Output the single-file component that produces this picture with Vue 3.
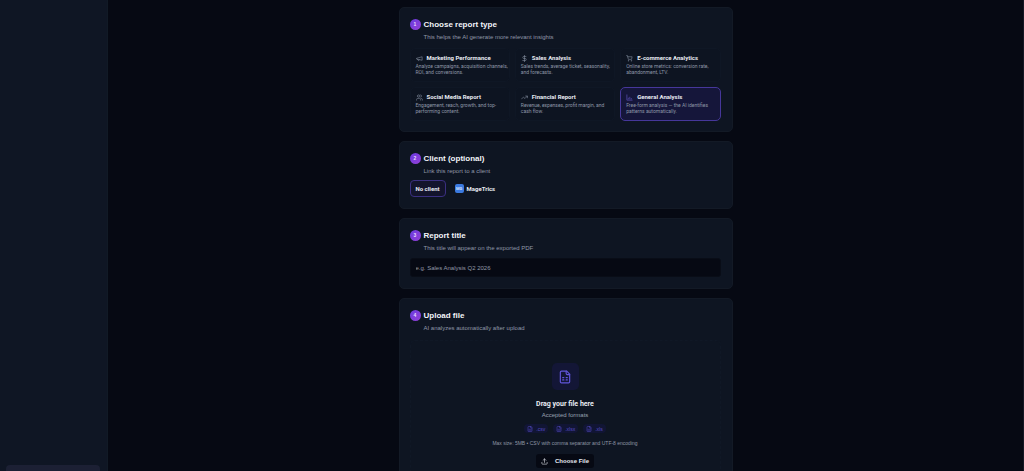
<script setup>
import { ref } from 'vue'

const selectedType = ref('general')
const title = ref('')

const reportTypes = [
  {
    id: 'marketing',
    name: 'Marketing Performance',
    text: 'Analyze campaigns, acquisition channels, ROI, and conversions.',
    paths: ['M3 11l18-5v12L3 14z', 'M11.6 16.8a3 3 0 1 1-5.8-1.6'],
  },
  {
    id: 'sales',
    name: 'Sales Analysis',
    text: 'Sales trends, average ticket, seasonality, and forecasts.',
    paths: ['M12 1v22', 'M17 5H9.5a3.5 3.5 0 0 0 0 7h5a3.5 3.5 0 0 1 0 7H6'],
  },
  {
    id: 'ecommerce',
    name: 'E-commerce Analytics',
    text: 'Online store metrics: conversion rate, abandonment, LTV.',
    paths: [
      'M2 2h3l3 13h11l2-9H6',
      'M8 20a1 1 0 1 0 2 0a1 1 0 1 0-2 0',
      'M18 20a1 1 0 1 0 2 0a1 1 0 1 0-2 0',
    ],
  },
  {
    id: 'social',
    name: 'Social Media Report',
    text: 'Engagement, reach, growth, and top-performing content.',
    paths: [
      'M16 21v-2a4 4 0 0 0-4-4H6a4 4 0 0 0-4 4v2',
      'M5 7a4 4 0 1 0 8 0a4 4 0 1 0-8 0',
      'M22 21v-2a4 4 0 0 0-3-3.9',
      'M16 3.1a4 4 0 0 1 0 7.8',
    ],
  },
  {
    id: 'financial',
    name: 'Financial Report',
    text: 'Revenue, expenses, profit margin, and cash flow.',
    paths: ['M22 7l-8.5 8.5-5-5L2 17', 'M16 7h6v6'],
  },
  {
    id: 'general',
    name: 'General Analysis',
    text: 'Free-form analysis — the AI identifies patterns automatically.',
    paths: ['M3 3v18h18', 'M8 17v-3', 'M13 17v-6', 'M18 17v-2'],
  },
]

const formats = ['.csv', '.xlsx', '.xls']

const sheetPaths = [
  'M15 2H6a2 2 0 0 0-2 2v16a2 2 0 0 0 2 2h12a2 2 0 0 0 2-2V7z',
  'M14 2v4a2 2 0 0 0 2 2h4',
  'M8 13h2',
  'M14 13h2',
  'M8 17h2',
  'M14 17h2',
]
</script>

<template>
  <div class="shell">
    <aside class="sidebar">
      <div class="sidebar-card"></div>
    </aside>

    <main class="main">
      <div class="column">
        <section class="card types-card">
          <header class="head">
            <span class="step">1</span>
            <h2>Choose report type</h2>
          </header>
          <p class="sub">This helps the AI generate more relevant insights</p>
          <div class="types">
            <button
              v-for="type in reportTypes"
              :key="type.id"
              type="button"
              class="type"
              :class="{ selected: selectedType === type.id }"
              @click="selectedType = type.id"
            >
              <span class="type-head">
                <svg class="icon" viewBox="0 0 24 24" aria-hidden="true">
                  <path v-for="d in type.paths" :key="d" :d="d" />
                </svg>
                <span class="type-name">{{ type.name }}</span>
              </span>
              <span class="type-text">{{ type.text }}</span>
            </button>
          </div>
        </section>

        <section class="card">
          <header class="head">
            <span class="step">2</span>
            <h2>Client (optional)</h2>
          </header>
          <p class="sub">Link this report to a client</p>
          <div class="clients">
            <button type="button" class="client selected">No client</button>
            <button type="button" class="client">
              <span class="avatar">MG</span>
              MageTrics
            </button>
          </div>
        </section>

        <section class="card">
          <header class="head">
            <span class="step">3</span>
            <h2><label for="report-title">Report title</label></h2>
          </header>
          <p class="sub">This title will appear on the exported PDF</p>
          <input
            id="report-title"
            v-model="title"
            class="field"
            type="text"
            placeholder="e.g. Sales Analysis Q2 2026"
          />
        </section>

        <section class="card">
          <header class="head">
            <span class="step">4</span>
            <h2>Upload file</h2>
          </header>
          <p class="sub">AI analyzes automatically after upload</p>
          <div class="drop">
            <span class="drop-icon">
              <svg viewBox="0 0 24 24" aria-hidden="true">
                <path v-for="d in sheetPaths" :key="d" :d="d" />
              </svg>
            </span>
            <p class="drop-title">Drag your file here</p>
            <p class="drop-sub">Accepted formats</p>
            <div class="formats">
              <span v-for="format in formats" :key="format" class="format">
                <svg viewBox="0 0 24 24" aria-hidden="true">
                  <path v-for="d in sheetPaths" :key="d" :d="d" />
                </svg>
                {{ format }}
              </span>
            </div>
            <p class="hint">Max size: 5MB • CSV with comma separator and UTF-8 encoding</p>
            <button type="button" class="choose">
              <svg viewBox="0 0 24 24" aria-hidden="true">
                <path d="M21 15v4a2 2 0 0 1-2 2H5a2 2 0 0 1-2-2v-4" />
                <path d="M17 8l-5-5-5 5" />
                <path d="M12 3v12" />
              </svg>
              Choose File
            </button>
          </div>
        </section>
      </div>
    </main>
  </div>
</template>

<style>
body {
  margin: 0;
  background: #060913;
}
</style>

<style scoped>
.shell {
  display: flex;
  height: 100vh;
  overflow: hidden;
  background: #060913;
  color: #e8ebf2;
  font-family: "Liberation Sans", Arial, sans-serif;
}

.shell *,
.shell {
  box-sizing: border-box;
}

button,
input {
  font-family: inherit;
  margin: 0;
}

svg {
  fill: none;
  stroke: currentColor;
  stroke-width: 2;
  stroke-linecap: round;
  stroke-linejoin: round;
  flex: none;
}

.sidebar {
  flex: 0 0 108px;
  display: flex;
  flex-direction: column;
  justify-content: flex-end;
  padding: 0 7px 0 6px;
  background: #0f1624;
  border-right: 1px solid #111a26;
}

.sidebar-card {
  height: 6px;
  border-radius: 4px 4px 0 0;
  background: #1c2034;
}

.main {
  flex: 1;
  overflow-y: auto;
  scrollbar-width: none;
  border-right: 1px solid #141824;
}

.column {
  display: flex;
  flex-direction: column;
  gap: 9px;
  width: 100%;
  max-width: 334px;
  margin: 0 auto;
  padding: 7px 0;
}

.card {
  padding: 11px 11px 11px 10px;
  background: #0e1522;
  border: 1px solid #131a26;
  border-radius: 5px;
}

.types-card {
  padding-bottom: 10px;
}

.head {
  display: flex;
  align-items: center;
  gap: 3px;
}

.step {
  display: grid;
  place-items: center;
  width: 11px;
  height: 11px;
  border-radius: 50%;
  background: linear-gradient(135deg, #6a3be0, #9440d6);
  color: #e6d9fb;
  font-size: 5px;
  font-weight: 700;
  line-height: 11px;
}

h2 {
  margin: 0;
  font-size: 8px;
  line-height: 11px;
  font-weight: 700;
  color: #f2f4f9;
}

p {
  margin: 0;
}

.sub {
  margin: 3px 0 0 14px;
  font-size: 6px;
  line-height: 8px;
  color: #9098a8;
}

.types {
  display: grid;
  grid-template-columns: repeat(3, minmax(0, 1fr));
  gap: 5px;
  margin-top: 7px;
}

.type {
  display: flex;
  flex-direction: column;
  gap: 1px;
  height: 34px;
  padding: 5px 0 5px 5px;
  border: 1px solid #0f1725;
  border-radius: 5px;
  background: #0d1421;
  text-align: left;
  color: inherit;
}

.type.selected {
  background: #15163a;
  border-color: #46379a;
}

.type-head {
  display: flex;
  align-items: center;
  gap: 4px;
}

.icon {
  width: 7px;
  height: 7px;
  color: #8790a2;
}

.selected .icon {
  color: #6a5bd0;
}

.type-name {
  font-family: Roboto, "Liberation Sans", sans-serif;
  font-size: 6px;
  line-height: 8px;
  font-weight: 700;
  white-space: nowrap;
}

.type-text {
  font-family: Roboto, "Liberation Sans", sans-serif;
  font-size: 5px;
  line-height: 6px;
  color: #8d96a7;
}

.clients {
  display: flex;
  gap: 3px;
  margin-top: 5px;
}

.client {
  display: flex;
  align-items: center;
  gap: 3px;
  height: 17px;
  padding: 0 5px;
  border: 1px solid transparent;
  border-radius: 4px;
  background: transparent;
  color: #e8ebf2;
  font-family: Roboto, "Liberation Sans", sans-serif;
  font-size: 6px;
  font-weight: 700;
}

.client.selected {
  background: #13142c;
  border-color: #3b3081;
}

.avatar {
  display: grid;
  place-items: center;
  width: 9px;
  height: 9px;
  border-radius: 2px;
  background: #3b7ae0;
  color: #d5e4fc;
  font-size: 4px;
}

.field {
  display: block;
  width: 100%;
  height: 19px;
  margin-top: 6px;
  padding: 0 5px;
  border: 1px solid #090d17;
  border-radius: 3px;
  background: #060913;
  color: #e8ebf2;
  font-size: 6px;
}

.field::placeholder {
  color: #9299a8;
  opacity: 1;
}

.drop {
  display: flex;
  flex-direction: column;
  align-items: center;
  margin-top: 8px;
  padding: 22px 10px;
  border: 1px dashed #101826;
  border-radius: 5px;
}

.drop-icon {
  display: grid;
  place-items: center;
  width: 27px;
  height: 27px;
  border-radius: 5px;
  background: #131636;
  color: #6156dc;
}

.drop-icon svg {
  width: 14px;
  height: 14px;
}

.drop-title {
  margin-top: 9px;
  font-family: Roboto, "Liberation Sans", sans-serif;
  font-size: 7px;
  line-height: 10px;
  font-weight: 700;
}

.drop-sub {
  margin-top: 2px;
  font-size: 6px;
  line-height: 8px;
  color: #9aa2b1;
}

.formats {
  display: flex;
  gap: 5px;
  margin-top: 5px;
}

.format {
  display: flex;
  align-items: center;
  gap: 3px;
  height: 9px;
  padding: 0 3px;
  border-radius: 4px;
  background: #111534;
  color: #574dc6;
  font-size: 5px;
}

.format svg {
  width: 6px;
  height: 6px;
}

.hint {
  margin-top: 6px;
  font-size: 5px;
  line-height: 8px;
  color: #8f97a6;
}

.choose {
  display: flex;
  align-items: center;
  gap: 7px;
  height: 14px;
  margin-top: 7px;
  padding: 0 5px;
  border: 0;
  border-radius: 3px;
  background: #060913;
  color: #e8ebf2;
  font-size: 6px;
  font-weight: 700;
}

.choose svg {
  width: 7px;
  height: 7px;
}
</style>
